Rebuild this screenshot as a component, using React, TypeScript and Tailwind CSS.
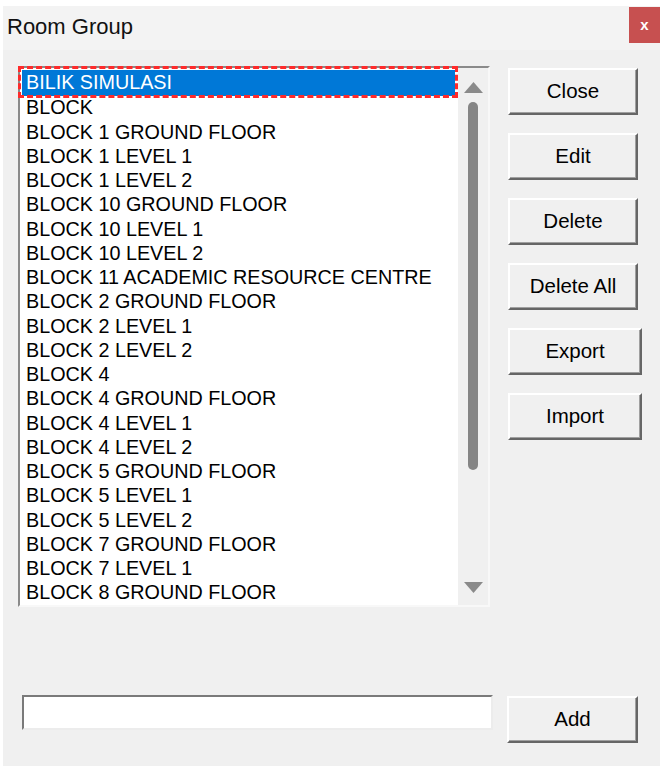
import React from "react";

const rooms = [
  "BILIK SIMULASI",
  "BLOCK",
  "BLOCK 1 GROUND FLOOR",
  "BLOCK 1 LEVEL 1",
  "BLOCK 1 LEVEL 2",
  "BLOCK 10 GROUND FLOOR",
  "BLOCK 10 LEVEL 1",
  "BLOCK 10 LEVEL 2",
  "BLOCK 11 ACADEMIC RESOURCE CENTRE",
  "BLOCK 2 GROUND FLOOR",
  "BLOCK 2 LEVEL 1",
  "BLOCK 2 LEVEL 2",
  "BLOCK 4",
  "BLOCK 4 GROUND FLOOR",
  "BLOCK 4 LEVEL 1",
  "BLOCK 4 LEVEL 2",
  "BLOCK 5 GROUND FLOOR",
  "BLOCK 5 LEVEL 1",
  "BLOCK 5 LEVEL 2",
  "BLOCK 7 GROUND FLOOR",
  "BLOCK 7 LEVEL 1",
  "BLOCK 8 GROUND FLOOR",
];

const actions = [
  { label: "Close", wide: false },
  { label: "Edit", wide: false },
  { label: "Delete", wide: false },
  { label: "Delete All", wide: false },
  { label: "Export", wide: true },
  { label: "Import", wide: true },
];

function WinButton({ label, className = "" }: { label: string; className?: string }) {
  return (
    <button
      className={
        "h-[47px] flex items-center justify-center bg-[#f0f0f0] border-2 border-t-white border-l-white border-b-[#666] border-r-[#666] text-[20.5px] text-black shadow-[inset_-1px_-1px_0_#a0a0a0] " +
        className
      }
    >
      {label}
    </button>
  );
}

function Arrow({ up }: { up?: boolean }) {
  return (
    <svg width="19" height="11" viewBox="0 0 19 11">
      <path d={up ? "M9.5 0 L19 11 L0 11 Z" : "M0 0 L19 0 L9.5 11 Z"} fill="#8a8a8a" />
    </svg>
  );
}

export default function App() {
  return (
    <div
      className="w-[667px] h-[771px] bg-white pt-[6px] pl-[3px]"
      style={{ fontFamily: '"Liberation Sans", Arial, sans-serif' }}
    >
      <div className="w-[657px] h-[760px] flex flex-col bg-[#f0f0f0]">
        {/* title bar */}
        <div className="h-[44px] flex items-start justify-between bg-[#f3f3f3]">
          <span className="pl-[4px] pt-[8px] text-[22px] leading-[26px] text-[#111]">Room Group</span>
          <div className="mt-[1px] w-[31px] h-[36px] bg-[#c75050] flex items-center justify-center text-white text-[15px] font-bold">
            x
          </div>
        </div>

        {/* list + buttons */}
        <div className="flex pl-[15px] pt-[16px]">
          <div className="relative w-[472px] h-[541px] flex bg-white border-2 border-t-[#8a8a8a] border-l-[#8a8a8a] border-b-[#f8f8f8] border-r-[#f8f8f8]">
            <div className="flex-1 flex flex-col pt-[2px] pl-[2px] pr-[3px] overflow-hidden">
              {rooms.map((r, i) => (
                <div
                  key={r}
                  className={
                    "shrink-0 h-[24.25px] flex items-center pl-[4px] text-[19.75px] whitespace-nowrap " +
                    (i === 0 ? "bg-[#0078d7] text-white h-[26px]" : "text-black")
                  }
                >
                  {r}
                </div>
              ))}
            </div>
            <div className="w-[30px] flex flex-col items-center bg-[#f0f0f0] pt-[14px] pb-[12px]">
              <Arrow up />
              <div className="mt-[9px] w-[10px] h-[368px] rounded-full bg-[#858585]" />
              <div className="flex-1" />
              <Arrow />
            </div>
            <div className="absolute -left-[2px] -top-[2px] w-[440px] h-[32px] border-[3px] border-dashed border-[#ff2a2a]" />
          </div>

          <div className="ml-[18px] mt-[2px] flex flex-col gap-[18px]">
            {actions.map((a) => (
              <WinButton key={a.label} label={a.label} className={a.wide ? "w-[134px]" : "w-[130px]"} />
            ))}
          </div>
        </div>

        {/* bottom add row */}
        <div className="flex items-start pl-[19px] mt-[88px]">
          <input
            className="w-[471px] h-[35px] bg-white border-2 border-t-[#7a7a7a] border-l-[#7a7a7a] border-b-[#ececec] border-r-[#ececec] outline-none px-1 text-[19px]"
            defaultValue=""
          />
          <WinButton label="Add" className="ml-[14px] mt-[1px] w-[131px]" />
        </div>
      </div>
    </div>
  );
}
